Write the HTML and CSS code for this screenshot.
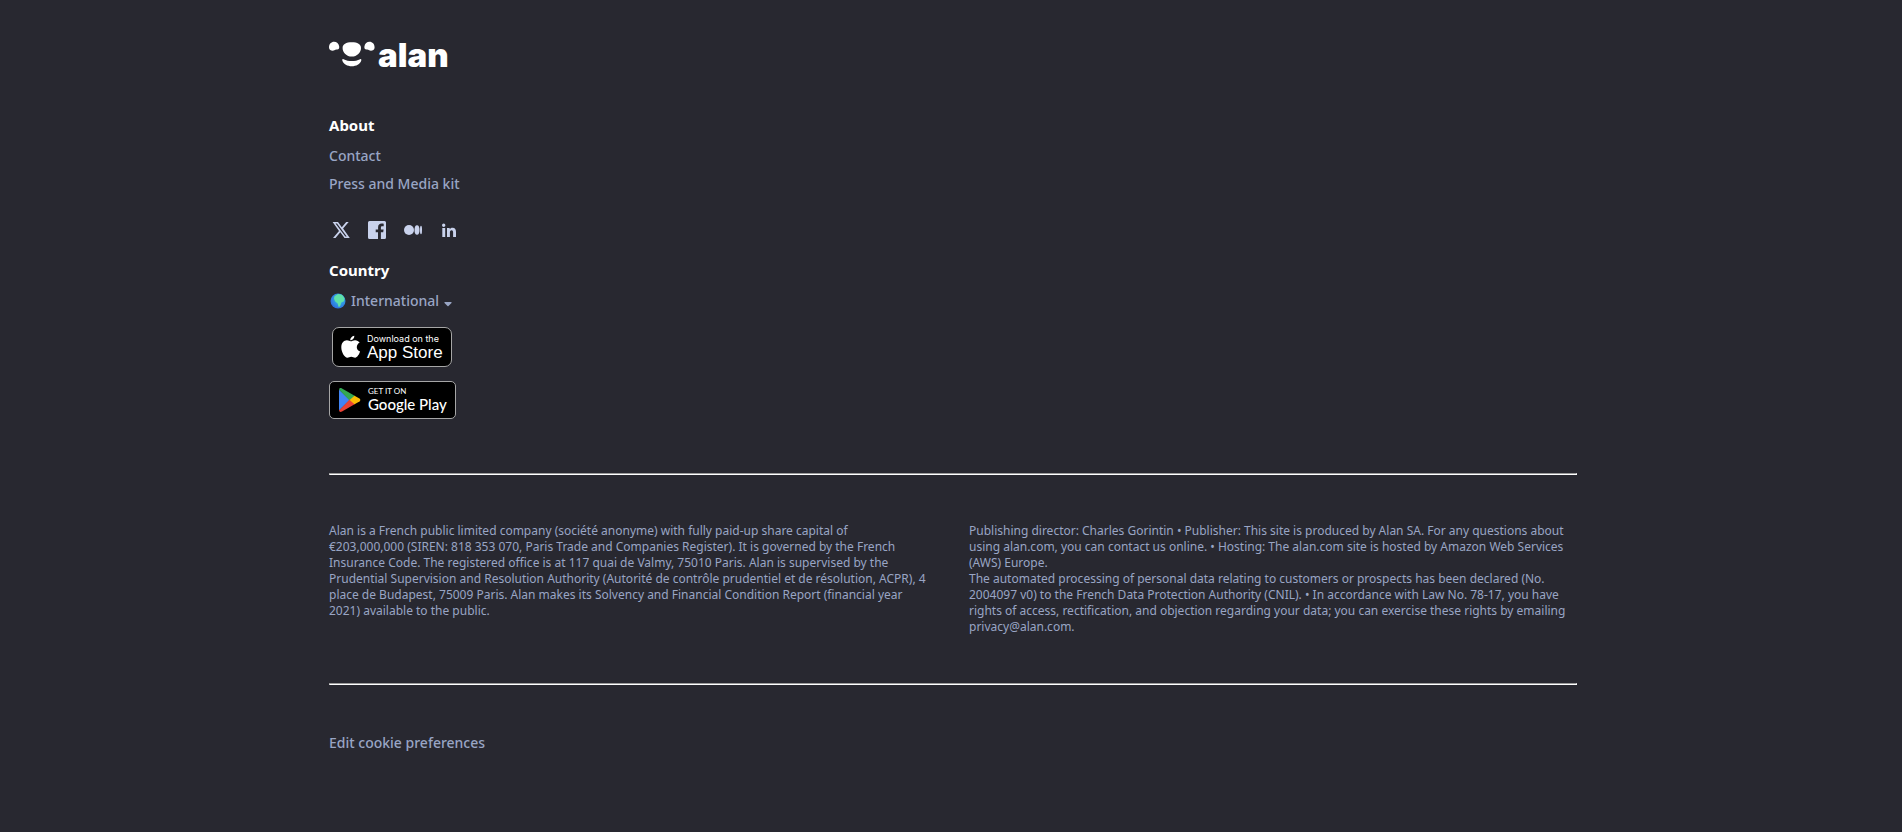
FILE: index.html
```html
<!DOCTYPE html>
<html lang="en">
<head>
  <meta charset="UTF-8">
  <meta name="viewport" content="width=device-width, initial-scale=1.0">
  <title>Alan</title>
  <link rel="stylesheet" href="styles.css">
</head>
<body>
  <footer class="footer">
    <a class="logo" href="#" aria-label="Alan home">
      <svg width="46" height="26" viewBox="0 0 46 26">
        <g fill="#fff">
          <path d="M0 6.5C0 3 2.300.8 5 .8s4.800 2 5.200 4.700c.3 2-.7 3.200-2.200 3-1.100-.1-1.700.1-2.600.8C4.200 10.200 0 10 0 6.500z"/>
          <path d="M45.600 6.500c0-3.500-2.300-5.700-5-5.700s-4.800 2-5.200 4.700c-.3 2 .7 3.200 2.200 3 1.100-.1 1.700.1 2.600.8 1.200.9 5.400.7 5.400-2.800z"/>
          <path d="M22.800 1.300c5.700 0 9.200 2 9.200 5.600 0 4.500-4 8.600-9.200 8.600s-9.200-4.100-9.200-8.600c0-3.600 3.500-5.600 9.200-5.600z"/>
          <path d="M14.500 18.200c5 2.500 11.600 2.500 16.600 0 1.100-.5 1.500.4 1.100 1.600-1.100 3.300-5 5.500-9.400 5.500s-8.300-2.200-9.400-5.500c-.4-1.200 0-2.100 1.100-1.600z"/>
        </g>
      </svg>
      <span class="logo-name">alan</span>
    </a>

    <h2>About</h2>
    <ul class="links">
      <li><a href="#">Contact</a></li>
      <li><a href="#">Press and Media kit</a></li>
    </ul>

    <div class="social">
      <a href="#" aria-label="X">
        <svg width="24" height="24" viewBox="0 0 24 24">
          <path fill="#c9d2ec" d="M17.200 4h2.500l-5.600 6.500L20.800 20h-5.300l-4.200-5.800L6.500 20H4l6-7L3.600 4H9l3.800 5.300L17.200 4zm-.9 14.400h1.400L8 5.500H6.500l9.800 12.900z"/>
        </svg>
      </a>
      <a href="#" aria-label="Facebook">
        <svg width="24" height="24" viewBox="0 0 24 24">
          <path fill="#c9d2ec" d="M4.500 3h15A1.500 1.500 0 0 1 21 4.500v15a1.500 1.500 0 0 1-1.500 1.500h-3.600v-6.800h2.300l.4-2.800h-2.700V9.700c0-.9.4-1.400 1.400-1.400h1.400V5.700c-.5-.1-1.200-.2-2-.2-2.200 0-3.600 1.300-3.600 3.700v2.200h-2.400v2.800H13V21H4.500A1.500 1.500 0 0 1 3 19.500v-15A1.500 1.500 0 0 1 4.500 3z"/>
        </svg>
      </a>
      <a href="#" aria-label="Medium">
        <svg width="24" height="24" viewBox="0 0 24 24">
          <g fill="#c9d2ec">
            <circle cx="8" cy="12" r="5"/>
            <ellipse cx="16" cy="12" rx="2.500" ry="4.700"/>
            <ellipse cx="20" cy="12" rx="1" ry="4.200"/>
          </g>
        </svg>
      </a>
      <a href="#" aria-label="LinkedIn">
        <svg width="24" height="24" viewBox="0 0 24 24">
          <path fill="#c9d2ec" d="M5.300 10h2.900v9H5.300zM6.700 5.500a1.700 1.700 0 1 1 0 3.400 1.700 1.700 0 0 1 0-3.400zM10 10h2.700v1.200c.5-.9 1.400-1.500 2.800-1.500 2.700 0 3.500 1.700 3.500 4.300v5h-2.900v-4.500c0-1.300-.3-2.300-1.500-2.300-1.300 0-1.700 1-1.700 2.300V19H10z"/>
        </svg>
      </a>
    </div>

    <h2>Country</h2>
    <button class="country" type="button">
      <svg width="16" height="16" viewBox="0 0 16 16">
        <defs>
          <radialGradient id="sea" cx="0.600" cy="0.400" r="0.650">
            <stop offset="0" stop-color="#35c5ec"/>
            <stop offset="1" stop-color="#2d6bdc"/>
          </radialGradient>
        </defs>
        <circle cx="8" cy="8" r="7.500" fill="url(#sea)"/>
        <path fill="#5fe0a8" d="M4.500 3.200 8 1l4 .8 2.500 3.400-.5 3-2.700 1.300-1.200 3.700-1.500.8-.9-3.600L5 8.200 4 5.500z"/>
      </svg>
      <span>International</span>
      <svg class="caret" width="8" height="5" viewBox="0 0 8 5"><path fill="#99a5c4" d="M1 0h6q1 0 .5 1L4.500 4q-.5.500-1 0l-3-3Q0 0 1 0z"/></svg>
    </button>

    <div class="stores">
      <a class="app-store" href="#" aria-label="Download on the App Store">
        <svg width="120" height="40" viewBox="0 0 120 40">
          <rect x="0.500" y="0.500" width="119" height="39" rx="6.500" fill="#000" stroke="#a6a6a6"/>
          <path fill="#fff" d="M24.800 20.300c0-2.200 1.200-3.700 2.900-4.700-1.100-1.500-2.700-2.300-4.500-2.400-1.900-.1-3.400 1.100-4.400 1.100-1 0-2.300-1-3.900-1-3 .1-5.600 2.600-5.600 6.900 0 5.100 3.400 10.500 6.100 10.500 1.400 0 2.200-.9 3.800-.9s2.400.9 3.900.9c2.100 0 4-3.300 5-6.100-2.300-1-3.300-2.700-3.300-4.300zM22.300 8.800c-2.500.4-4.200 2.500-4.100 4.500 2.400.1 4.300-2.200 4.100-4.500z"/>
          <text class="badge-small" x="35" y="15">Download on the</text>
          <text class="badge-apple" x="35" y="31">App Store</text>
        </svg>
      </a>
      <a class="google-play" href="#" aria-label="Get it on Google Play">
        <svg width="127" height="38" viewBox="0 0 127 38">
          <rect x="0.500" y="0.500" width="126" height="37" rx="4.500" fill="#000" stroke="#a6a6a6"/>
          <path fill="#4285f4" d="M10 8.500v21L20.800 19z"/>
          <path fill="#34a853" d="M10 8.500c.4-1.600 1.700-1.700 3-1l13.500 7.800L20.600 19.500z"/>
          <path fill="#ea4335" d="M10 29.500c.4 1.600 1.700 1.700 3 1l13.500-7.800-5.900-4.200z"/>
          <path fill="#fbbc04" d="m25.500 14.700 5 2.900c1.100.7 1.100 2.100 0 2.800l-5 2.900-4.900-4.300z"/>
          <text class="badge-get" x="39" y="13">GET IT ON</text>
          <text class="badge-google" x="39" y="29">Google Play</text>
        </svg>
      </a>
    </div>

    <hr>

    <div class="legal">
      <p>Alan is a French public limited company (société anonyme) with fully paid-up share capital of<br>
      €203,000,000 (SIREN: 818 353 070, Paris Trade and Companies Register). It is governed by the French<br>
      Insurance Code. The registered office is at 117 quai de Valmy, 75010 Paris. Alan is supervised by the<br>
      Prudential Supervision and Resolution Authority (Autorité de contrôle prudentiel et de résolution, ACPR), 4<br>
      place de Budapest, 75009 Paris. Alan makes its Solvency and Financial Condition Report (financial year<br>
      2021) available to the public.</p>
      <p>Publishing director: Charles Gorintin • Publisher: This site is produced by Alan SA. For any questions about using alan.com, you can contact us online. • Hosting: The alan.com site is hosted by Amazon Web Services (AWS) Europe.<br>
      The automated processing of personal data relating to customers or prospects has been declared (No. 2004097 v0) to the French Data Protection Authority (CNIL). • In accordance with Law No. 78-17, you have rights of access, rectification, and objection regarding your data; you can exercise these rights by emailing privacy@alan.com.</p>
    </div>

    <hr>

    <button class="cookies" type="button">Edit cookie preferences</button>
  </footer>
</body>
</html>
```

FILE: styles.css
```css
* {
  box-sizing: border-box;
}

body {
  margin: 0;
  background-color: #282830;
  color: #99a5c4;
  font-family: "Noto Sans", "Open Sans", sans-serif;
  font-size: 14px;
  line-height: 20px;
}

.footer {
  max-width: 1252px;
  margin: 0 auto;
  padding: 41px 0 76px 4px;
}

a {
  color: inherit;
  text-decoration: none;
}

svg {
  display: block;
}

.logo {
  display: flex;
  width: max-content;
  height: 28px;
  gap: 3px;
  color: #fff;
}

.logo-name {
  font-family: Inter, sans-serif;
  font-size: 33px;
  font-weight: 900;
  line-height: 28px;
}

h2 {
  margin: 0;
  color: #fff;
  font-size: 15px;
  font-weight: 700;
  line-height: 24px;
}

.logo + h2 {
  margin-top: 44px;
}

.links {
  margin: 9px 0 24px;
  padding: 0;
  list-style: none;
  font-weight: 500;
}

.links li {
  margin-bottom: 8px;
}

.social {
  display: flex;
  gap: 12px;
  margin-bottom: 16px;
}

button {
  padding: 0;
  border: none;
  background: none;
  color: inherit;
  font: inherit;
  font-weight: 500;
  cursor: pointer;
}

.country {
  display: flex;
  align-items: center;
  gap: 5px;
  margin-top: 9px;
  padding-left: 1px;
}

.caret {
  margin-top: 6px;
}

.stores {
  display: flex;
  flex-direction: column;
  align-items: flex-start;
  gap: 14px;
  margin-top: 16px;
}

.app-store {
  margin-left: 3px;
}

.stores text {
  fill: #fff;
}

.badge-small {
  font: 400 9px Inter, sans-serif;
}

.badge-apple {
  font: 400 17px "Liberation Sans", sans-serif;
}

.badge-get {
  font: 400 8px Lato, sans-serif;
}

.badge-google {
  font: 500 15px Lato, sans-serif;
}

hr {
  margin: 54px 0 48px;
  border: 1px solid;
  border-color: #9a9a9a #fff #fff #9a9a9a;
}

.legal {
  display: grid;
  grid-template-columns: 1fr 1fr;
  gap: 32px;
  font-size: 12px;
  line-height: 16px;
}

.legal p {
  margin: 0;
}

.legal + hr {
  margin-top: 48px;
}

@media (max-width: 1280px) {
  .footer {
    padding-left: 24px;
    padding-right: 24px;
  }
}

@media (max-width: 700px) {
  .legal {
    grid-template-columns: 1fr;
  }
}
```
